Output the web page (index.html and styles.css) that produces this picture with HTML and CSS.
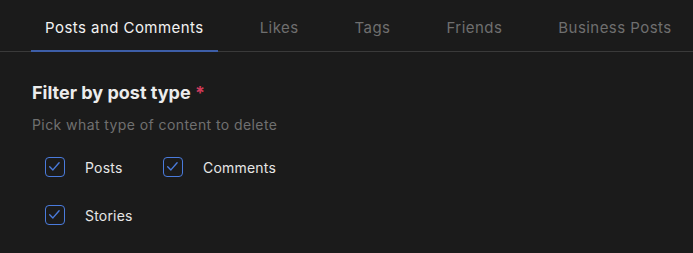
FILE: index.html
```html
<!DOCTYPE html>
<html>
<head>
<meta charset="utf-8">
<link rel="stylesheet" href="styles.css">
</head>
<body>
<div class="page">
  <nav class="tabs">
    <div class="tab active">Posts and Comments</div>
    <div class="tab">Likes</div>
    <div class="tab">Tags</div>
    <div class="tab">Friends</div>
    <div class="tab">Business Posts</div>
  </nav>
  <section class="filter">
    <h2 class="title">Filter by post type <span class="req">*</span></h2>
    <p class="hint">Pick what type of content to delete</p>
    <div class="options">
      <label class="opt"><span class="box"><svg viewBox="1.5 1.5 17 17"><path d="M5.2 10.3 L8.4 13.4 L14.6 6.3" fill="none" stroke="#4a7bdc" stroke-width="1.4" stroke-linecap="round" stroke-linejoin="round"/></svg></span><span class="lbl">Posts</span></label>
      <label class="opt"><span class="box"><svg viewBox="1.5 1.5 17 17"><path d="M5.2 10.3 L8.4 13.4 L14.6 6.3" fill="none" stroke="#4a7bdc" stroke-width="1.4" stroke-linecap="round" stroke-linejoin="round"/></svg></span><span class="lbl">Comments</span></label>
      <label class="opt"><span class="box"><svg viewBox="1.5 1.5 17 17"><path d="M5.2 10.3 L8.4 13.4 L14.6 6.3" fill="none" stroke="#4a7bdc" stroke-width="1.4" stroke-linecap="round" stroke-linejoin="round"/></svg></span><span class="lbl">Stories</span></label>
    </div>
  </section>
</div>
</body>
</html>
```
FILE: styles.css
```css
* { box-sizing: border-box; }
html, body { margin: 0; padding: 0; }
body {
  background: #1b1b1b;
  font-family: Inter, "Noto Sans", sans-serif;
  width: 693px;
  height: 253px;
  overflow: hidden;
}
.tabs {
  display: flex;
  gap: 28px;
  padding-left: 31px;
  height: 52px;
  border-bottom: 1px solid #3a3a3a;
}
.tab {
  padding: 0 14px;
  height: 52px;
  display: flex;
  align-items: center;
  padding-top: 5px;
  font-size: 15px;
  letter-spacing: 0.45px;
  color: #6f6f6f;
  white-space: nowrap;
  border-bottom: 2px solid transparent;
  margin-bottom: -1px;
}
.tab.active {
  color: #f2f2f2;
  border-bottom-color: #3d5ea8;
}
.filter {
  padding: 30px 32px 0;
}
.title {
  margin: 0;
  font-size: 18px;
  font-weight: 700;
  color: #ececec;
  line-height: 22px;
}
.req { color: #d03a5a; font-weight: 700; }
.hint {
  margin: 12px 0 0;
  font-size: 14px;
  color: #707070;
  letter-spacing: 0.42px;
  line-height: 17px;
}
.options {
  display: grid;
  grid-template-columns: 118px 140px;
  row-gap: 28px;
  padding-left: 13px;
  margin-top: 24px;
}
.opt {
  display: flex;
  align-items: center;
  gap: 20px;
  height: 20px;
}
.box {
  width: 20px;
  height: 20px;
  border: 1.5px solid #4a7bdc;
  border-radius: 4px;
  flex-shrink: 0;
}
.box svg { display: block; width: 17px; height: 17px; }
.lbl {
  font-size: 14px;
  color: #e6e6e6;
  letter-spacing: 0.2px;
}
```
